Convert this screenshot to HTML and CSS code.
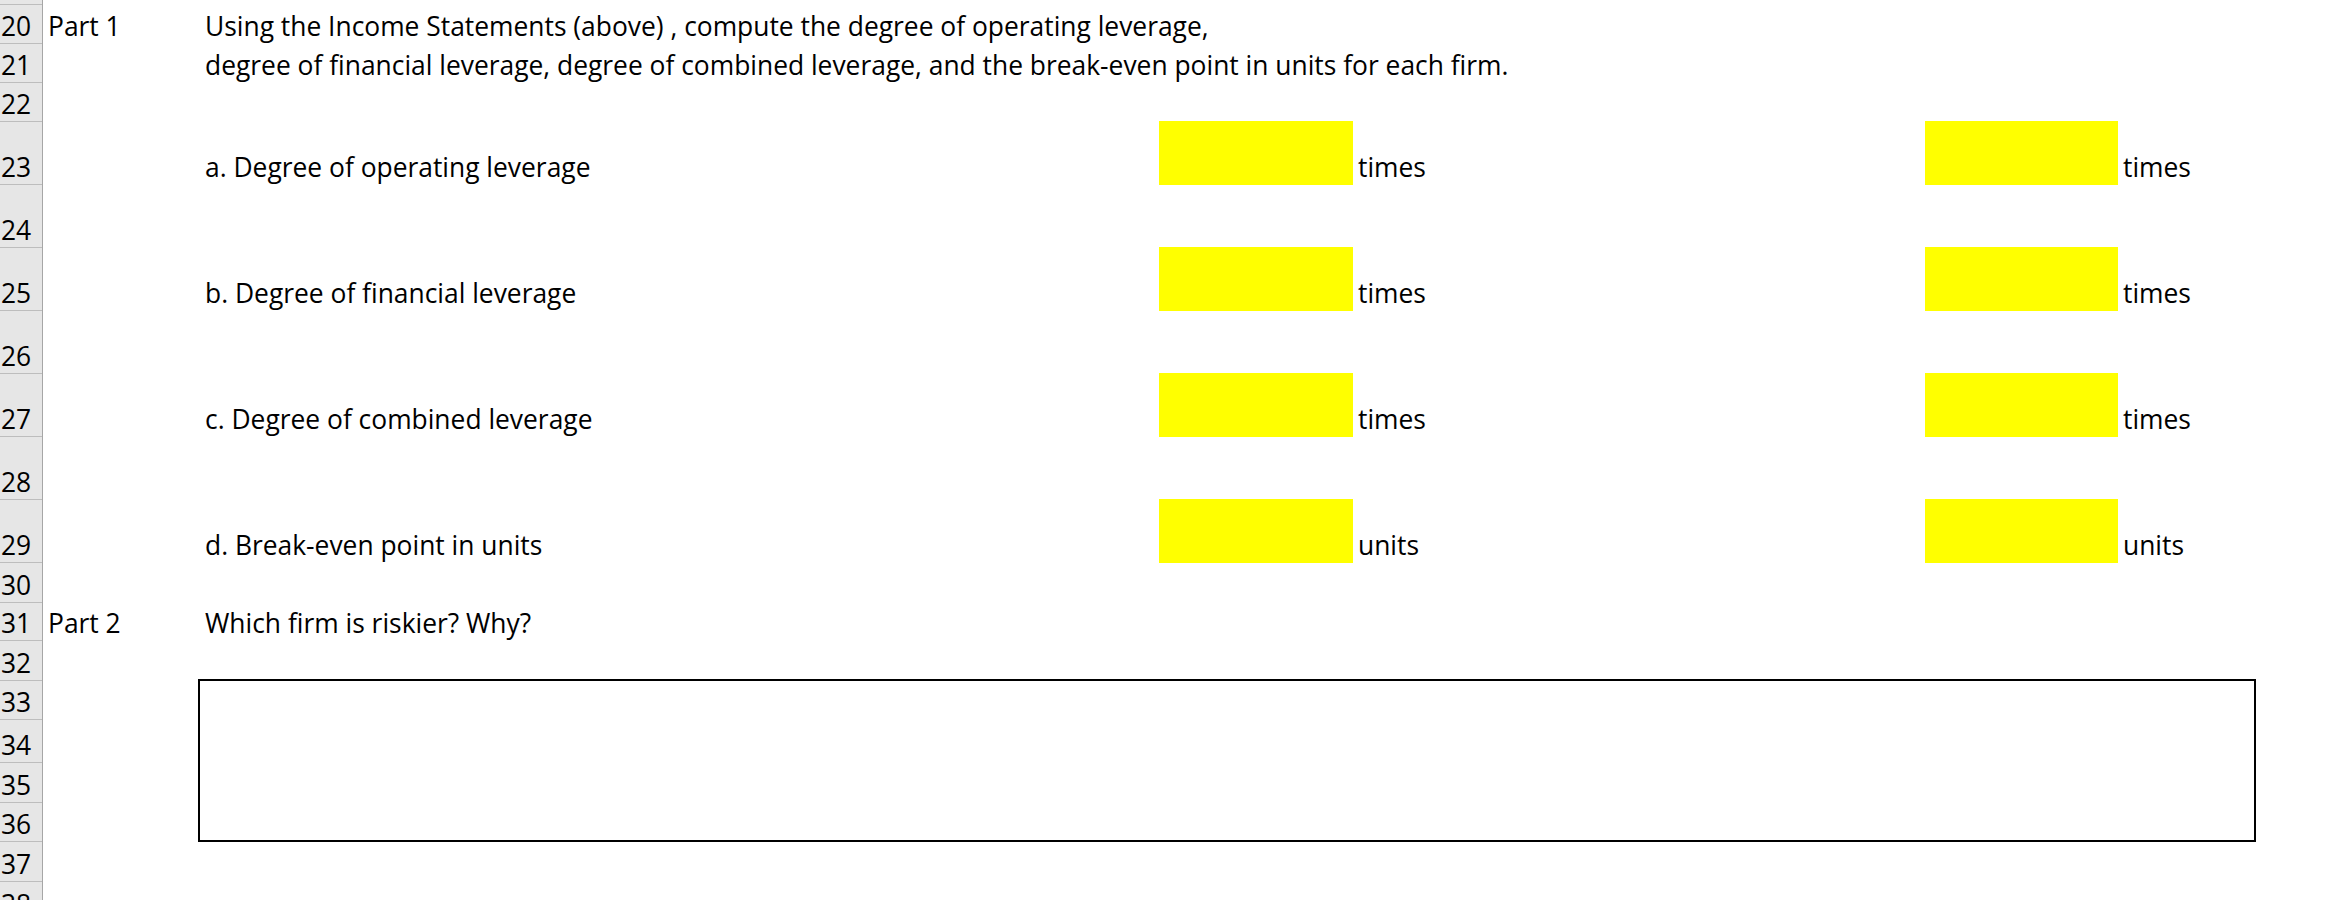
FILE: index.html
```html
<!DOCTYPE html>
<html>
<head>
<meta charset="utf-8">
<link rel="stylesheet" href="styles.css">
</head>
<body>
<div class="sheet">
  <div class="heads">
    <div class="rh h5"></div>
    <div class="rh h39">20</div>
    <div class="rh h39">21</div>
    <div class="rh h39">22</div>
    <div class="rh h63">23</div>
    <div class="rh h63">24</div>
    <div class="rh h63">25</div>
    <div class="rh h63">26</div>
    <div class="rh h63">27</div>
    <div class="rh h63">28</div>
    <div class="rh h63">29</div>
    <div class="rh h40">30</div>
    <div class="rh h38">31</div>
    <div class="rh h40">32</div>
    <div class="rh h39">33</div>
    <div class="rh h43">34</div>
    <div class="rh h40">35</div>
    <div class="rh h39">36</div>
    <div class="rh h40">37</div>
    <div class="rh h40">38</div>
  </div>
  <div class="cells">
    <div class="row h5"></div>
    <div class="row h39"><div class="c">Part 1</div><div class="c">Using the Income Statements (above) , compute the degree of operating leverage,</div></div>
    <div class="row h39"><div class="c"></div><div class="c">degree of financial leverage, degree of combined leverage, and the break-even point in units for each firm.</div></div>
    <div class="row h39"></div>
    <div class="row h63"><div class="c"></div><div class="c">a. Degree of operating leverage</div><div class="fill"></div><div class="c">times</div><div class="fill"></div><div class="c">times</div></div>
    <div class="row h63"></div>
    <div class="row h63"><div class="c"></div><div class="c">b. Degree of financial leverage</div><div class="fill"></div><div class="c">times</div><div class="fill"></div><div class="c">times</div></div>
    <div class="row h63"></div>
    <div class="row h63"><div class="c"></div><div class="c">c. Degree of combined leverage</div><div class="fill"></div><div class="c">times</div><div class="fill"></div><div class="c">times</div></div>
    <div class="row h63"></div>
    <div class="row h63"><div class="c"></div><div class="c">d. Break-even point in units</div><div class="fill"></div><div class="c">units</div><div class="fill"></div><div class="c">units</div></div>
    <div class="row h40"></div>
    <div class="row h38"><div class="c">Part 2</div><div class="c">Which firm is riskier? Why?</div></div>
    <div class="row h40"></div>
    <div class="answer-area">
      <div class="answer-box"></div>
    </div>
    <div class="row h40"></div>
    <div class="row h40"></div>
  </div>
</div>
</body>
</html>
```
FILE: styles.css
```css
html, body {
  margin: 0;
  padding: 0;
  background: #ffffff;
}
body {
  width: 2328px;
  height: 900px;
  overflow: hidden;
  font-family: "Open Sans", "Liberation Sans", sans-serif;
  font-size: 26.4px;
  font-variant-ligatures: none;
  color: #000000;
}
.sheet {
  display: flex;
  align-items: flex-start;
}
.heads {
  width: 43px;
  flex: none;
  background: #e6e6e6;
  border-right: 1px solid #a6a6a6;
  box-sizing: border-box;
}
.rh {
  box-sizing: border-box;
  border-bottom: 1px solid #bdbdbd;
  display: flex;
  align-items: flex-end;
  padding: 0 0 4px 1px;
  line-height: 1;
  white-space: nowrap;
}
.h5 { height: 5px; padding: 0; }
.h38 { height: 38px; }
.h39 { height: 39px; }
.h40 { height: 40px; }
.h43 { height: 43px; }
.h63 { height: 63px; }
.cells {
  flex: 1;
  min-width: 0;
}
.row {
  display: grid;
  grid-template-columns: 157px 959px 194px 572px 193px 1fr;
  align-items: end;
}
.c {
  padding: 0 0 5px 5px;
  white-space: nowrap;
  line-height: 1;
}
.fill {
  background: #ffff00;
  align-self: stretch;
  margin-top: -1px;
}
.answer-area {
  height: 161px;
  padding-left: 155px;
}
.answer-box {
  box-sizing: border-box;
  width: 2058px;
  height: 163px;
  margin-top: -2px;
  border: 2px solid #000000;
  background: #ffffff;
}
```
